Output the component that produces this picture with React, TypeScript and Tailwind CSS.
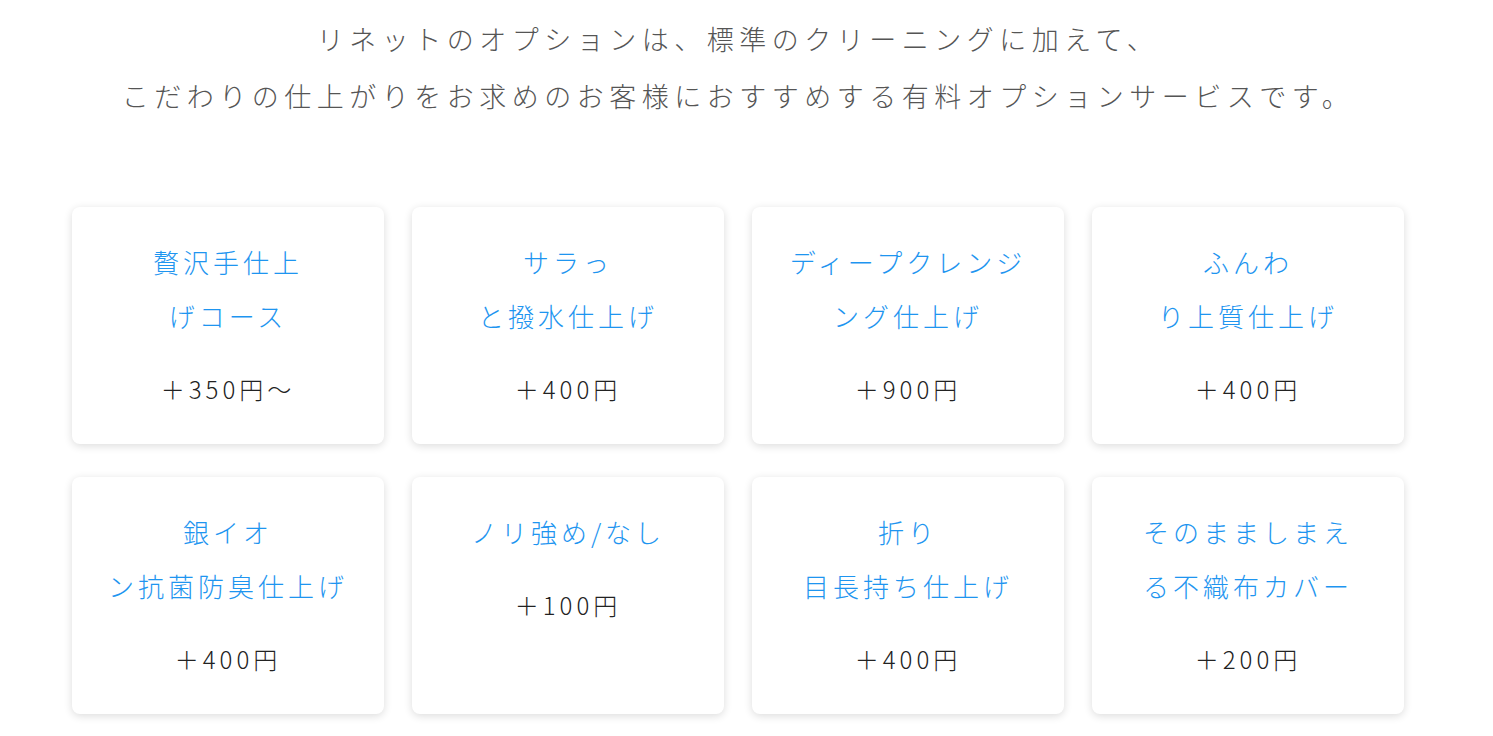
import React from "react";

type Option = {
  lines: string[];
  price: string;
};

const options: Option[] = [
  { lines: ["贅沢手仕上", "げコース"], price: "＋350円〜" },
  { lines: ["サラっ", "と撥水仕上げ"], price: "＋400円" },
  { lines: ["ディープクレンジ", "ング仕上げ"], price: "＋900円" },
  { lines: ["ふんわ", "り上質仕上げ"], price: "＋400円" },
  { lines: ["銀イオ", "ン抗菌防臭仕上げ"], price: "＋400円" },
  { lines: ["ノリ強め/なし"], price: "＋100円" },
  { lines: ["折り", "目長持ち仕上げ"], price: "＋400円" },
  { lines: ["そのまましまえ", "る不織布カバー"], price: "＋200円" },
];

const OptionCard = ({ option }: { option: Option }) => {
  return (
    <div className="bg-white rounded-lg shadow-[0_2px_8px_rgba(0,0,0,0.14)] pt-[28px] pb-[37px] flex flex-col items-center text-center">
      <p className="text-[26px] font-light leading-[54px] tracking-[4px] text-[#1e95f0]">
        {option.lines.map((line, i) => (
          <span key={i} className="block">
            {line}
          </span>
        ))}
      </p>
      <p className="mt-[28px] text-[24px] font-light leading-[36px] tracking-[4px] text-[#222222]">
        {option.price}
      </p>
    </div>
  );
};

export default function App() {
  return (
    <div
      className="min-h-screen bg-white"
      style={{ fontFamily: '"Noto Sans CJK JP", "Noto Sans", sans-serif' }}
    >
      <div className="w-[1332px] ml-[72px] pt-[10px]">
        <p className="text-center text-[27px] font-light leading-[57px] tracking-[5.5px] text-[#555555]">
          リネットのオプションは、標準のクリーニングに加えて、
          <br />
          こだわりの仕上がりをお求めのお客様におすすめする有料オプションサービスです。
        </p>
        <div className="grid grid-cols-4 gap-x-[28px] gap-y-[33px] mt-[83px]">
          {options.map((option, i) => (
            <OptionCard key={i} option={option} />
          ))}
        </div>
      </div>
    </div>
  );
}
